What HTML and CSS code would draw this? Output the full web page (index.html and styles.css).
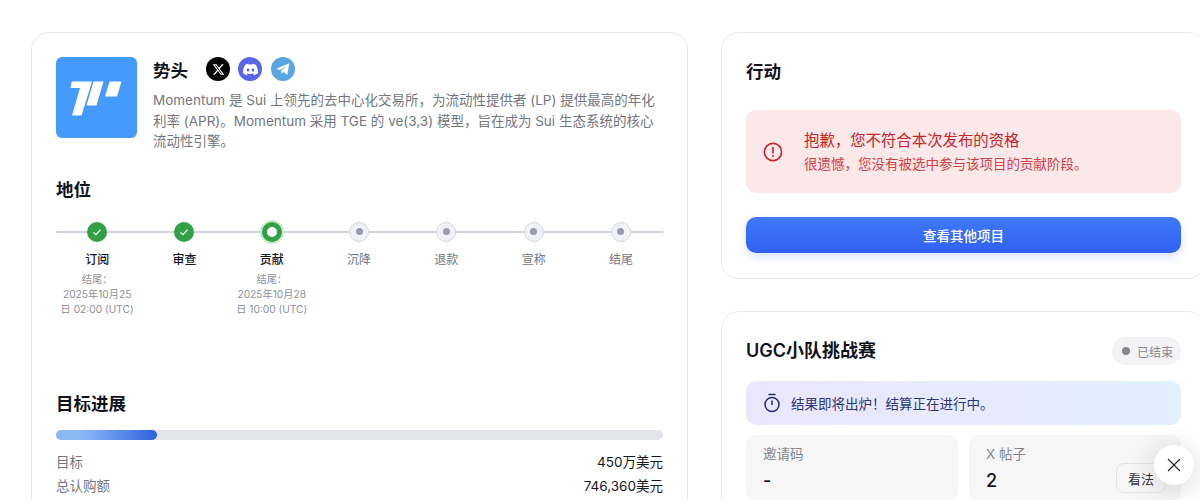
FILE: index.html
```html
<!DOCTYPE html>
<html lang="zh-CN">
<head>
  <meta charset="UTF-8" />
  <meta name="viewport" content="width=device-width, initial-scale=1" />
  <title>势头</title>
  <link rel="stylesheet" href="styles.css">
</head>
<body>
  <div class="page">
    <div class="card main-card">
      <div class="project">
        <div class="logo">
          <svg viewBox="0 0 81 81" width="81" height="81">
            <path fill="#fff" d="M15.700 24.500H36L25.500 58.500H16L24 31H14.500z" />
            <path fill="#fff" d="M37.500 24.500H47.500L40.500 48.500H30.500z" />
            <path fill="#fff" d="M53.500 24.500H65.500L61 39.500H49z" />
          </svg>
        </div>
        <div class="project-info">
          <div class="project-head">
            <span class="project-name">势头</span>
            <div class="socials">
              <span class="social x">
                <svg viewBox="0 0 24 24" width="13" height="13"><path fill="#fff" d="M18.244 2.25h3.308l-7.227 8.26 8.502 11.24H16.17l-5.214-6.817L4.99 21.75H1.68l7.73-8.835L1.254 2.25H8.08l4.713 6.231zm-1.161 17.52h1.833L7.084 4.126H5.117z" /></svg>
              </span>
              <span class="social discord">
                <svg viewBox="0 0 24 24" width="15" height="15"><path fill="#fff" d="M20.317 4.37a19.791 19.791 0 0 0-4.885-1.515.074.074 0 0 0-.079.037c-.21.375-.444.864-.608 1.25a18.27 18.27 0 0 0-5.487 0 12.64 12.64 0 0 0-.617-1.25.077.077 0 0 0-.079-.037A19.736 19.736 0 0 0 3.677 4.37a.07.07 0 0 0-.032.027C.533 9.046-.32 13.58.099 18.057a.082.082 0 0 0 .031.057 19.9 19.9 0 0 0 5.993 3.03.078.078 0 0 0 .084-.028 14.09 14.09 0 0 0 1.226-1.994.076.076 0 0 0-.041-.106 13.107 13.107 0 0 1-1.872-.892.077.077 0 0 1-.008-.128 10.2 10.2 0 0 0 .372-.292.074.074 0 0 1 .077-.01c3.928 1.793 8.18 1.793 12.062 0a.074.074 0 0 1 .078.01c.12.098.246.198.373.292a.077.077 0 0 1-.006.127 12.299 12.299 0 0 1-1.873.892.077.077 0 0 0-.041.107c.36.698.772 1.362 1.225 1.993a.076.076 0 0 0 .084.028 19.839 19.839 0 0 0 6.002-3.03.077.077 0 0 0 .032-.054c.5-5.177-.838-9.674-3.549-13.66a.061.061 0 0 0-.031-.03zM8.02 15.33c-1.183 0-2.157-1.085-2.157-2.419 0-1.333.956-2.419 2.157-2.419 1.21 0 2.176 1.096 2.157 2.42 0 1.333-.956 2.418-2.157 2.418zm7.975 0c-1.183 0-2.157-1.085-2.157-2.419 0-1.333.955-2.419 2.157-2.419 1.21 0 2.176 1.096 2.157 2.42 0 1.333-.946 2.418-2.157 2.418z" /></svg>
              </span>
              <span class="social telegram">
                <svg viewBox="0 0 24 24" width="16" height="16"><path fill="#fff" d="M2 11.500 21.500 3.500 18.500 20.500 12.800 16.400 9.800 19.300 9.300 14.800 17 7.500 7.400 13.600z" /></svg>
              </span>
            </div>
          </div>
          <p class="project-desc">Momentum 是 Sui 上领先的去中心化交易所，为流动性提供者 (LP) 提供最高的年化利率 (APR)。Momentum 采用 TGE 的 ve(3,3) 模型，旨在成为 Sui 生态系统的核心流动性引擎。</p>
        </div>
      </div>

      <h2 class="section-title status-title">地位</h2>
      <div class="stepper">
        <div class="step done">
          <span class="dot"><svg viewBox="0 0 12 12" width="12" height="12"><path d="M2.500 6.300 5 8.600 9.500 3.600" fill="none" stroke="#fff" stroke-width="1.100" /></svg></span>
          <span class="step-name">订阅</span>
          <span class="step-date">结尾：<br>2025年10月25<br>日 02:00 (UTC)</span>
        </div>
        <div class="step done">
          <span class="dot"><svg viewBox="0 0 12 12" width="12" height="12"><path d="M2.500 6.300 5 8.600 9.500 3.600" fill="none" stroke="#fff" stroke-width="1.100" /></svg></span>
          <span class="step-name">审查</span>
        </div>
        <div class="step current">
          <span class="dot"><i></i></span>
          <span class="step-name">贡献</span>
          <span class="step-date">结尾：<br>2025年10月28<br>日 10:00 (UTC)</span>
        </div>
        <div class="step">
          <span class="dot"><i></i></span>
          <span class="step-name">沉降</span>
        </div>
        <div class="step">
          <span class="dot"><i></i></span>
          <span class="step-name">退款</span>
        </div>
        <div class="step">
          <span class="dot"><i></i></span>
          <span class="step-name">宣称</span>
        </div>
        <div class="step">
          <span class="dot"><i></i></span>
          <span class="step-name">结尾</span>
        </div>
      </div>

      <h2 class="section-title goal-title">目标进展</h2>
      <div class="progress"><div class="progress-fill"></div></div>
      <div class="goal-rows">
        <div class="goal-row"><span>目标</span><strong>450万美元</strong></div>
        <div class="goal-row"><span>总认购额</span><strong>746,360美元</strong></div>
      </div>
    </div>

    <div class="side">
      <div class="card action-card">
        <h2 class="section-title">行动</h2>
        <div class="alert">
          <svg viewBox="0 0 20 20" width="20" height="20">
            <circle cx="10" cy="10" r="8.600" fill="none" stroke="#c8242c" stroke-width="1.600" />
            <path d="M10 5.500V11" stroke="#c8242c" stroke-width="1.600" stroke-linecap="round" />
            <circle cx="10" cy="14" r="1" fill="#c8242c" />
          </svg>
          <div>
            <p class="alert-title">抱歉，您不符合本次发布的资格</p>
            <p class="alert-text">很遗憾，您没有被选中参与该项目的贡献阶段。</p>
          </div>
        </div>
        <button class="primary-btn">查看其他项目</button>
      </div>

      <div class="card ugc-card">
        <div class="ugc-head">
          <h2 class="section-title">UGC小队挑战赛</h2>
          <span class="badge"><i></i>已结束</span>
        </div>
        <div class="banner">
          <svg viewBox="0 0 20 20" width="20" height="20" fill="none" stroke="#262f6e" stroke-width="1.500">
            <circle cx="10" cy="11.500" r="7" />
            <path d="M7 1.500H13M10 8V11.500" stroke-linecap="round" />
          </svg>
          <span>结果即将出炉！结算正在进行中。</span>
        </div>
        <div class="stats">
          <div class="stat">
            <span class="stat-label">邀请码</span>
            <span class="stat-value">-</span>
          </div>
          <div class="stat">
            <span class="stat-label">X 帖子</span>
            <span class="stat-value">2</span>
            <button class="view-btn">看法</button>
          </div>
        </div>
      </div>
    </div>
  </div>

  <button class="close-btn">
    <svg viewBox="0 0 14 14" width="14" height="14"><path d="M1 1 13 13M13 1 1 13" stroke="#222" stroke-width="1.100" /></svg>
  </button>
</body>
</html>
```

FILE: styles.css
```css
* {
  box-sizing: border-box;
}

html,
body {
  height: 500px;
  overflow: hidden;
}

body {
  margin: 0;
  background: #fff;
  color: #14161f;
  font-family: Inter, "Noto Sans CJK SC", sans-serif;
}

h2,
p {
  margin: 0;
}

.page {
  display: grid;
  grid-template-columns: 657px 485px;
  column-gap: 33px;
  height: 500px;
  overflow: hidden;
  padding: 32px 0 0 31px;
  width: 1200px;
}

.card {
  background: #fff;
  border: 1px solid #e8e8ea;
  border-radius: 18px;
  padding: 24px;
}

.main-card {
  height: 560px;
}

.project {
  display: flex;
  gap: 16px;
}

.logo {
  flex: none;
  width: 81px;
  height: 81px;
  background: #459bfb;
  border-radius: 6px;
}

.logo svg {
  display: block;
}

.project-head {
  display: flex;
  align-items: center;
  height: 24px;
}

.project-name {
  font-size: 17.500px;
  font-weight: 600;
  width: 53px;
}

.socials {
  display: flex;
  gap: 8.400px;
}

.social {
  display: flex;
  align-items: center;
  justify-content: center;
  width: 24px;
  height: 24px;
  border-radius: 50%;
}

.x {
  background: #000;
}

.discord {
  background: #5865e8;
}

.telegram {
  background: #5ca5e3;
}

.project-desc {
  margin-top: 9px;
  font-size: 13.500px;
  line-height: 20.500px;
  color: #73767f;
}

.section-title {
  font-size: 17.500px;
  font-weight: 600;
  line-height: 24px;
  color: #11131c;
}

.status-title {
  margin-top: 26px;
}

.stepper {
  position: relative;
  display: grid;
  grid-template-columns: repeat(7, 87.300px);
  margin: 20px 0 0 -2.500px;
  height: 144px;
}

.stepper::before {
  content: "";
  position: absolute;
  left: 2.500px;
  right: 0;
  top: 9px;
  height: 2px;
  background: #d2d3df;
}

.step {
  position: relative;
  display: flex;
  flex-direction: column;
  align-items: center;
  text-align: center;
}

.dot {
  display: flex;
  align-items: center;
  justify-content: center;
  width: 20px;
  height: 20px;
  background: #f1f2f6;
  border: 1px solid #d5d6de;
  border-radius: 50%;
}

.dot i {
  width: 7px;
  height: 7px;
  border-radius: 50%;
  background: #9a9cab;
}

.done .dot {
  background: #33a047;
  border: none;
}

.current .dot {
  background: #33a047;
  border: none;
  box-shadow: 0 0 0 2px #c7edcc;
}

.current .dot i {
  width: 10px;
  height: 10px;
  background: #fff;
}

.step-name {
  margin-top: 9px;
  font-size: 12px;
  line-height: 18px;
  color: #73767f;
}

.done .step-name,
.current .step-name {
  color: #14161f;
  font-weight: 500;
}

.step-date {
  margin-top: 3px;
  font-family: Inter, "Noto Sans CJK TC", sans-serif;
  font-size: 10.200px;
  line-height: 15px;
  color: #8d909a;
  white-space: nowrap;
}

.goal-title {
  margin-top: 26px;
}

.progress {
  margin-top: 14px;
  height: 10px;
  background: #e4e5ea;
  border-radius: 5px;
}

.progress-fill {
  width: 101px;
  height: 10px;
  border-radius: 5px;
  background: linear-gradient(90deg, #8db8f6, #8db8f6 25%, #2e60df);
}

.goal-rows {
  margin-top: 9px;
}

.goal-row {
  display: flex;
  justify-content: space-between;
  align-items: center;
  height: 24px;
  font-size: 13.500px;
  color: #73767f;
}

.goal-row strong {
  font-weight: 400;
  color: #14161f;
}

.side {
  display: flex;
  flex-direction: column;
  gap: 32px;
}

.action-card {
  flex: none;
  height: 247px;
}

.action-card .section-title {
  margin-top: 3px;
}

.alert {
  display: flex;
  align-items: center;
  gap: 21px;
  height: 83px;
  margin-top: 26px;
  width: 435px;
  padding-left: 17px;
  background: #fbe8e8;
  border-radius: 10px;
}

.alert-title {
  font-size: 15.400px;
  line-height: 22px;
  color: #c8242c;
}

.alert-text {
  margin-top: 3px;
  font-size: 13.500px;
  line-height: 19px;
  color: #d2404a;
}

.primary-btn {
  display: block;
  width: 435px;
  height: 36px;
  margin-top: 24px;
  border: none;
  border-radius: 10px;
  background: linear-gradient(180deg, #4079f9, #2f62f1);
  box-shadow: 0 4px 8px rgba(47, 98, 241, 0.18);
  color: #fff;
  font-family: inherit;
  font-size: 13.500px;
  font-weight: 500;
}

.ugc-card {
  flex: none;
  height: 300px;
}

.ugc-head {
  display: flex;
  justify-content: space-between;
  align-items: center;
  width: 435px;
  height: 28px;
  margin-top: 1px;
}

.ugc-head .section-title {
  font-size: 18px;
}

.badge {
  display: flex;
  align-items: center;
  gap: 7px;
  height: 28px;
  padding: 0 8px 0 10px;
  background: #f3f3f5;
  border-radius: 14px;
  font-size: 12px;
  color: #85878f;
}

.badge i {
  width: 8px;
  height: 8px;
  border-radius: 50%;
  background: #85878f;
}

.banner {
  display: flex;
  align-items: center;
  gap: 9px;
  width: 435px;
  height: 44px;
  margin-top: 16px;
  padding-left: 16px;
  background: linear-gradient(90deg, #ebe6fa, #e2effd);
  border-radius: 10px;
  font-size: 13.500px;
  color: #2c3678;
}

.stats {
  display: grid;
  grid-template-columns: 212px 212px;
  column-gap: 11px;
  margin-top: 10px;
}

.stat {
  position: relative;
  display: flex;
  flex-direction: column;
  height: 66px;
  padding: 9px 17px;
  background: #f6f6f7;
  border-radius: 10px;
}

.stat-label {
  font-size: 13.500px;
  line-height: 20px;
  color: #85878f;
}

.stat-value {
  margin-top: 5px;
  font-size: 18px;
  line-height: 24px;
  font-weight: 500;
}

.view-btn {
  position: absolute;
  right: 15px;
  top: 28px;
  width: 50px;
  height: 30px;
  padding: 0;
  background: #f6f6f7;
  border: 1px solid #e4e4e7;
  border-radius: 8px;
  font-family: inherit;
  font-size: 13px;
  color: #33353c;
}

.close-btn {
  position: fixed;
  left: 1154px;
  top: 445px;
  display: flex;
  align-items: center;
  justify-content: center;
  width: 40px;
  height: 40px;
  padding: 0;
  background: #fff;
  border: none;
  border-radius: 50%;
  box-shadow: 0 4px 28px rgba(0, 0, 0, 0.16);
}
```
